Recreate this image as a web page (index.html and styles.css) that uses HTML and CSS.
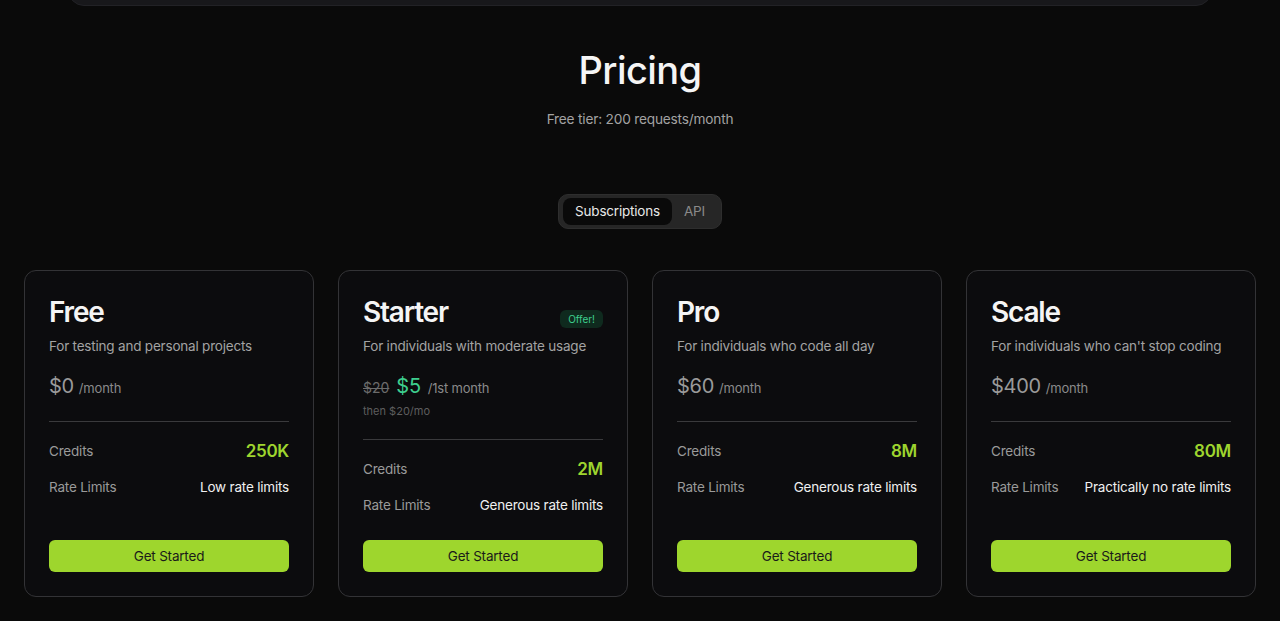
FILE: index.html
```html
<!DOCTYPE html>
<html lang="en">
<head>
<meta charset="utf-8">
<title>Pricing</title>
<link rel="stylesheet" href="styles.css">
</head>
<body>
<header class="nav"></header>
<main class="pricing">
  <h1 class="title">Pricing</h1>
  <p class="subtitle">Free tier: 200 requests/month</p>
  <div class="toggle">
    <span class="tab active">Subscriptions</span>
    <span class="tab">API</span>
  </div>
  <div class="cards">
    <section class="card">
      <div class="card-head"><h2 class="name">Free</h2></div>
      <p class="desc">For testing and personal projects</p>
      <div class="price"><span class="amount">$0</span><span class="period">/month</span></div>
      <hr class="divider">
      <div class="row"><span class="label">Credits</span><span class="credits">250K</span></div>
      <div class="row"><span class="label">Rate Limits</span><span class="value">Low rate limits</span></div>
      <button class="cta">Get Started</button>
    </section>
    <section class="card">
      <div class="card-head"><h2 class="name">Starter</h2><span class="badge">Offer!</span></div>
      <p class="desc">For individuals with moderate usage</p>
      <div class="price"><span class="old">$20</span><span class="amount offer">$5</span><span class="period">/1st month</span></div>
      <p class="then">then $20/mo</p>
      <hr class="divider">
      <div class="row"><span class="label">Credits</span><span class="credits">2M</span></div>
      <div class="row"><span class="label">Rate Limits</span><span class="value">Generous rate limits</span></div>
      <button class="cta">Get Started</button>
    </section>
    <section class="card">
      <div class="card-head"><h2 class="name">Pro</h2></div>
      <p class="desc">For individuals who code all day</p>
      <div class="price"><span class="amount">$60</span><span class="period">/month</span></div>
      <hr class="divider">
      <div class="row"><span class="label">Credits</span><span class="credits">8M</span></div>
      <div class="row"><span class="label">Rate Limits</span><span class="value">Generous rate limits</span></div>
      <button class="cta">Get Started</button>
    </section>
    <section class="card">
      <div class="card-head"><h2 class="name">Scale</h2></div>
      <p class="desc">For individuals who can't stop coding</p>
      <div class="price"><span class="amount">$400</span><span class="period">/month</span></div>
      <hr class="divider">
      <div class="row"><span class="label">Credits</span><span class="credits">80M</span></div>
      <div class="row"><span class="label">Rate Limits</span><span class="value">Practically no rate limits</span></div>
      <button class="cta">Get Started</button>
    </section>
  </div>
</main>
</body>
</html>
```
FILE: styles.css
```css
* { box-sizing: border-box; }
html, body { margin: 0; padding: 0; }
body {
  background: #0a0a0a;
  color: #f5f5f5;
  font-family: Inter, "Noto Sans", sans-serif;
  height: 621px;
  overflow: hidden;
}
.nav {
  height: 56px;
  margin: -50px 68px 0;
  background: #18181b;
  border: 1px solid #222226;
  border-radius: 16px;
}
.pricing {
  padding: 0 24px;
  display: flex;
  flex-direction: column;
  align-items: center;
}
.title {
  margin: 40px 0 0;
  font-size: 38px;
  font-weight: 500;
  letter-spacing: -0.6px;
  line-height: 48px;
}
.subtitle {
  margin: 16px 0 0;
  font-size: 13.7px;
  color: #a3a3a3;
  line-height: 18px;
  letter-spacing: -0.2px;
}
.toggle {
  margin-top: 66px;
  display: flex;
  align-items: center;
  padding: 3px 4px;
  background: #262626;
  border: 1px solid #2e2e2e;
  border-radius: 10px;
}
.tab {
  padding: 0 12px;
  height: 27px;
  line-height: 27px;
  font-size: 13.5px;
  color: #8a8a8a;
  border-radius: 8px;
  letter-spacing: -0.2px;
}
.tab.active {
  background: #0a0a0a;
  color: #e8e8e8;
}
.cards {
  margin-top: 41px;
  width: 100%;
  display: grid;
  grid-template-columns: repeat(4, 1fr);
  gap: 24px;
}
.card {
  height: 327px;
  background: #0c0c0e;
  border: 1px solid #333336;
  border-radius: 12px;
  padding: 24px 24px 24px;
  display: flex;
  flex-direction: column;
}
.card-head {
  display: flex;
  align-items: flex-start;
  justify-content: space-between;
}
.name {
  margin: 0;
  font-size: 28px;
  font-weight: 600;
  letter-spacing: -1.2px;
  line-height: 34px;
}
.badge {
  font-size: 10px;
  color: #3ecf8e;
  background: #0f2a1e;
  border-radius: 6px;
  padding: 3px 8px;
  line-height: 12px;
  margin-top: 15px;
}
.desc {
  margin: 8px 0 0;
  font-size: 13.5px;
  color: #a3a3a3;
  line-height: 18px;
  letter-spacing: -0.2px;
}
.price {
  margin-top: 19px;
  display: flex;
  align-items: baseline;
  gap: 5px;
  height: 24px;
}
.amount {
  font-size: 20px;
  color: #9a9a9a;
  letter-spacing: -0.3px;
}
.amount.offer { color: #3ecf8e; margin-right: 2px; }
.old {
  font-size: 14px;
  color: #6b6b6b;
  text-decoration: line-through;
  margin-right: 2px;
}
.period {
  font-size: 13px;
  color: #8a8a8a;
  letter-spacing: -0.2px;
}
.then {
  margin: 7px 0 -2px;
  font-size: 11px;
  color: #5e5e5e;
  line-height: 13px;
}
.divider {
  width: 100%;
  margin: 23px 0 0;
  border: 0;
  border-top: 1px solid #3a3a3c;
}
.row {
  display: flex;
  justify-content: space-between;
  align-items: center;
  height: 24px;
  margin-top: 12px;
}
.divider + .row { margin-top: 17px; }
.label {
  font-size: 13.5px;
  color: #9a9a9a;
  letter-spacing: -0.2px;
}
.credits {
  font-size: 17px;
  font-weight: 600;
  color: #9ed52e;
  letter-spacing: -0.3px;
}
.value {
  font-size: 13.5px;
  color: #f0f0f0;
  letter-spacing: -0.2px;
}
.cta {
  margin-top: auto;
  height: 32px;
  width: 100%;
  border: 0;
  border-radius: 6px;
  background: #9ed62d;
  color: #1a1a1a;
  font-family: inherit;
  font-size: 13.5px;
  letter-spacing: -0.2px;
  cursor: pointer;
}
```
